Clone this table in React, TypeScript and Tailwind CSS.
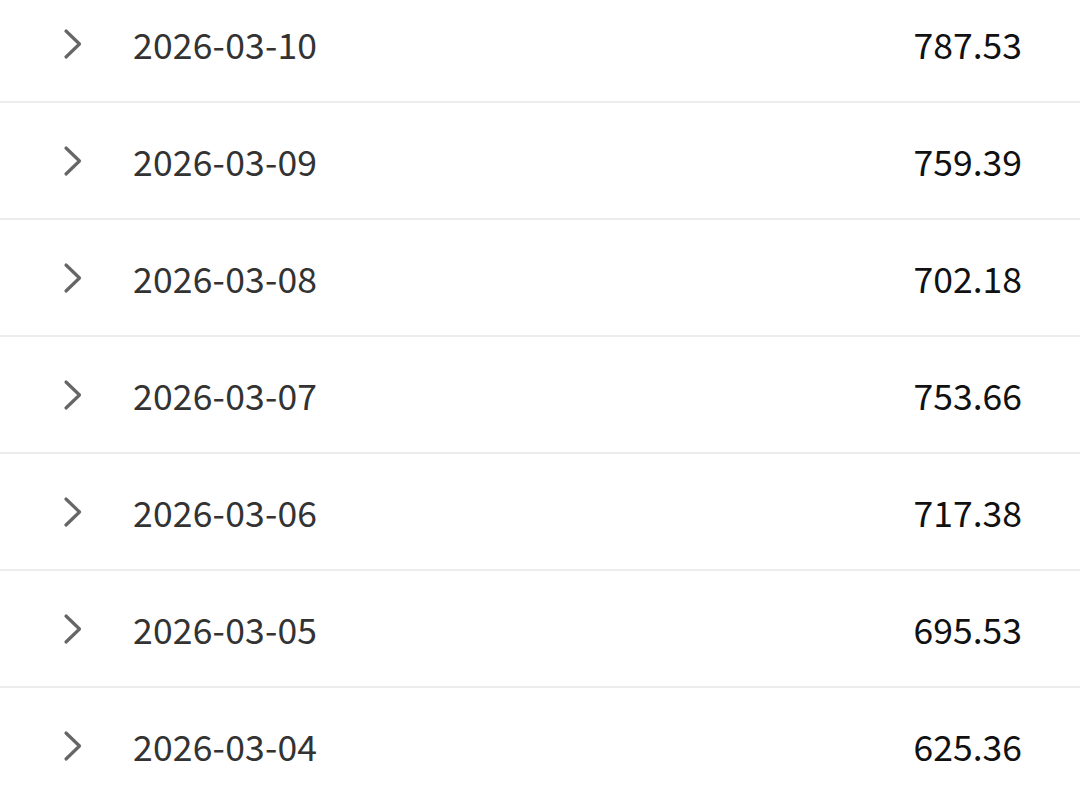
type Entry = {
  date: string;
  amount: string;
};

const entries: Entry[] = [
  { date: "2026-03-10", amount: "787.53" },
  { date: "2026-03-09", amount: "759.39" },
  { date: "2026-03-08", amount: "702.18" },
  { date: "2026-03-07", amount: "753.66" },
  { date: "2026-03-06", amount: "717.38" },
  { date: "2026-03-05", amount: "695.53" },
  { date: "2026-03-04", amount: "625.36" },
];

function Chevron() {
  return (
    <svg width="20" height="32" viewBox="0 0 20 32" className="shrink-0">
      <path
        d="M3 3 L16.5 16 L3 29"
        fill="none"
        stroke="#666666"
        strokeWidth="3.2"
        strokeLinecap="round"
        strokeLinejoin="round"
      />
    </svg>
  );
}

function Row({ entry }: { entry: Entry }) {
  return (
    <div className="h-[117px] flex items-center border-b-2 border-[#ededed] pl-[63px] pr-[58px]">
      <Chevron />
      <div className="ml-[50px] text-[35.5px] text-[#333333] tracking-[0.2px] leading-none">
        {entry.date}
      </div>
      <div className="ml-auto text-[35.5px] text-[#111111] leading-none">{entry.amount}</div>
    </div>
  );
}

export default function App() {
  return (
    <div
      className="w-[1080px] h-[800px] overflow-hidden bg-white"
      style={{ fontFamily: '"Noto Sans CJK SC", "Noto Sans", sans-serif' }}
    >
      <div className="-mt-[14px]">
        {entries.map((e) => (
          <Row key={e.date} entry={e} />
        ))}
      </div>
    </div>
  );
}
